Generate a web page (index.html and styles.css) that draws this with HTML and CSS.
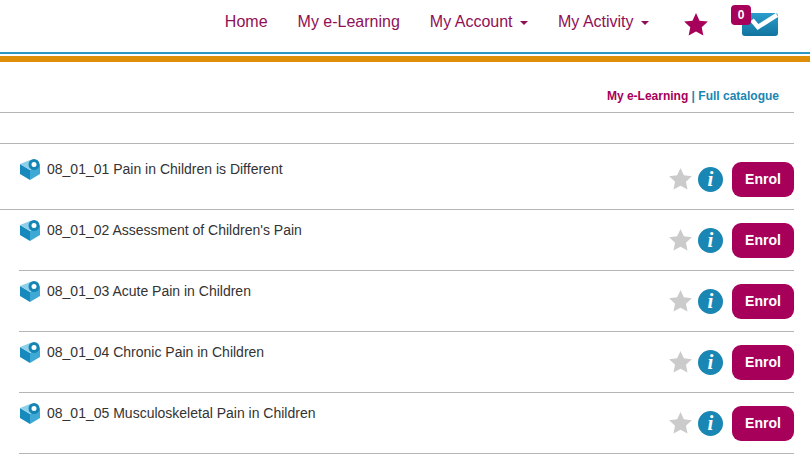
FILE: index.html
```html
<!DOCTYPE html>
<html lang="en">
<head>
  <meta charset="UTF-8" />
  <title>My e-Learning</title>
  <link rel="stylesheet" href="styles.css">
</head>
<body>

<!-- Top navigation -->
<header class="topbar">
  <nav class="main-nav">
    <a href="#">Home</a>
    <a href="#">My e-Learning</a>
    <a href="#">My Account <span class="caret"></span></a>
    <a href="#">My Activity <span class="caret"></span></a>
  </nav>
  <a href="#" class="nav-star">
    <svg width="24" height="23" viewBox="0 0 24 23"><use href="#star" fill="#a6005a"/></svg>
  </a>
  <a href="#" class="nav-mail">
    <svg width="36" height="23" viewBox="0 0 36 23">
      <defs>
        <linearGradient id="mailFill" x1="0" y1="0" x2="0" y2="1">
          <stop offset="0" stop-color="#2a9ccb"/>
          <stop offset="1" stop-color="#12749f"/>
        </linearGradient>
      </defs>
      <rect width="36" height="23" rx="3" fill="url(#mailFill)"/>
      <path d="M10 7l6 7L35 2" fill="none" stroke="#fff" stroke-width="4.500"/>
    </svg>
    <span class="badge">0</span>
  </a>
</header>
<div class="rule-blue"></div>
<div class="rule-orange"></div>

<div class="tabs">
  <a href="#" class="tab-active">My e-Learning</a> | <a href="#">Full catalogue</a>
</div>
<div class="spacer"></div>

<!-- Course list -->
<ul class="courses">
  <li class="course">
    <svg class="cube" width="22" height="23" viewBox="0 0 22 23"><use href="#cube"/></svg>
    <span class="course-title">08_01_01 Pain in Children is Different</span>
    <span class="star"><svg width="23" height="22" viewBox="0 0 24 23"><use href="#star" fill="#cbcbcb"/></svg></span>
    <span class="info">i</span>
    <a href="#" class="enrol">Enrol</a>
  </li>
  <li class="course">
    <svg class="cube" width="22" height="23" viewBox="0 0 22 23"><use href="#cube"/></svg>
    <span class="course-title">08_01_02 Assessment of Children's Pain</span>
    <span class="star"><svg width="23" height="22" viewBox="0 0 24 23"><use href="#star" fill="#cbcbcb"/></svg></span>
    <span class="info">i</span>
    <a href="#" class="enrol">Enrol</a>
  </li>
  <li class="course">
    <svg class="cube" width="22" height="23" viewBox="0 0 22 23"><use href="#cube"/></svg>
    <span class="course-title">08_01_03 Acute Pain in Children</span>
    <span class="star"><svg width="23" height="22" viewBox="0 0 24 23"><use href="#star" fill="#cbcbcb"/></svg></span>
    <span class="info">i</span>
    <a href="#" class="enrol">Enrol</a>
  </li>
  <li class="course">
    <svg class="cube" width="22" height="23" viewBox="0 0 22 23"><use href="#cube"/></svg>
    <span class="course-title">08_01_04 Chronic Pain in Children</span>
    <span class="star"><svg width="23" height="22" viewBox="0 0 24 23"><use href="#star" fill="#cbcbcb"/></svg></span>
    <span class="info">i</span>
    <a href="#" class="enrol">Enrol</a>
  </li>
  <li class="course">
    <svg class="cube" width="22" height="23" viewBox="0 0 22 23"><use href="#cube"/></svg>
    <span class="course-title">08_01_05 Musculoskeletal Pain in Children</span>
    <span class="star"><svg width="23" height="22" viewBox="0 0 24 23"><use href="#star" fill="#cbcbcb"/></svg></span>
    <span class="info">i</span>
    <a href="#" class="enrol">Enrol</a>
  </li>
</ul>

<!-- Shared icons -->
<svg class="icon-defs" width="0" height="0">
  <defs>
    <g id="cube">
      <path d="M1 5l10 6v10L1 15z" fill="#1689bd"/>
      <path d="M11 11l10-6v10l-10 6z" fill="#3fa9d6"/>
      <path d="M1 5l10-4 10 4-10 6z" fill="#8ed0ea"/>
      <circle cx="15" cy="5.500" r="4" fill="#fff" stroke="#1585b5" stroke-width="3"/>
    </g>
    <path id="star" d="M12 0l3.500 7.650 8.400.95-6.200 5.750 1.650 8.250L12 18.500l-7.350 4.100 1.650-8.250L.1 8.600l8.400-.95z"/>
  </defs>
</svg>

</body>
</html>
```

FILE: styles.css
```css
body {
  margin: 0;
  font-family: 'Liberation Sans', Arial, sans-serif;
  font-size: 14px;
  color: #333;
  background: #fff;
}

a {
  text-decoration: none;
}

/* Top navigation */
.topbar {
  display: flex;
  align-items: flex-start;
  justify-content: flex-end;
  height: 52px;
  padding-right: 32px;
}

.main-nav {
  display: flex;
  gap: 30px;
  padding-top: 12px;
  font-size: 16px;
  line-height: 20px;
}

.main-nav a {
  color: #8f0f55;
}

.caret {
  display: inline-block;
  width: 0;
  height: 0;
  margin-left: 3px;
  vertical-align: middle;
  border-top: 4px solid #8f0f55;
  border-left: 4px solid transparent;
  border-right: 4px solid transparent;
}

.nav-star {
  margin-left: 35px;
  padding-top: 13px;
  line-height: 0;
}

.nav-mail {
  position: relative;
  margin-left: 34px;
  padding-top: 13px;
  line-height: 0;
}

.badge {
  position: absolute;
  left: -11px;
  top: 5px;
  width: 20px;
  height: 20px;
  border-radius: 4px;
  background: #a6005a;
  color: #fff;
  font-size: 12px;
  font-weight: bold;
  line-height: 20px;
  text-align: center;
}

.rule-blue {
  height: 2px;
  background: #2b97c5;
}

.rule-orange {
  height: 6px;
  margin-top: 2px;
  background: #df8e0a;
}

/* Tabs above the list */
.tabs {
  height: 51px;
  box-sizing: border-box;
  margin-right: 16px;
  padding: 27px 15px 0 0;
  border-bottom: 1px solid #b5b5b5;
  color: #1a86b3;
  font-size: 12px;
  font-weight: bold;
  line-height: 14px;
  text-align: right;
}

.tabs a {
  color: #1a86b3;
}

.tabs .tab-active {
  color: #a6005a;
}

.spacer {
  height: 30px;
  margin-right: 16px;
  border-bottom: 1px solid #b5b5b5;
}

/* Course list */
.courses {
  list-style: none;
  margin: 0;
  padding: 0;
}

.course {
  display: flex;
  align-items: flex-start;
  height: 60px;
  margin: 0 16px 0 19px;
  border-bottom: 1px solid #b5b5b5;
}

.course:first-child {
  padding-top: 5px;
  margin-left: 0;
  padding-left: 19px;
}

.cube {
  margin-top: 10px;
  flex-shrink: 0;
}

.course-title {
  flex: 1;
  margin: 10px 0 0 6px;
  line-height: 20px;
}

.star {
  margin-top: 19px;
  line-height: 0;
}

.info {
  width: 25px;
  height: 25px;
  margin: 18px 0 0 6px;
  border-radius: 50%;
  background: #1a86b3;
  color: #fff;
  font-family: 'Liberation Serif', serif;
  font-size: 21px;
  font-style: italic;
  font-weight: bold;
  line-height: 25px;
  text-align: center;
}

.enrol {
  width: 62px;
  height: 35px;
  margin: 13px 0 0 9px;
  border-radius: 9px;
  background: #a6005a;
  color: #fff;
  font-size: 14px;
  font-weight: bold;
  line-height: 35px;
  text-align: center;
}

.icon-defs {
  position: absolute;
}
```
